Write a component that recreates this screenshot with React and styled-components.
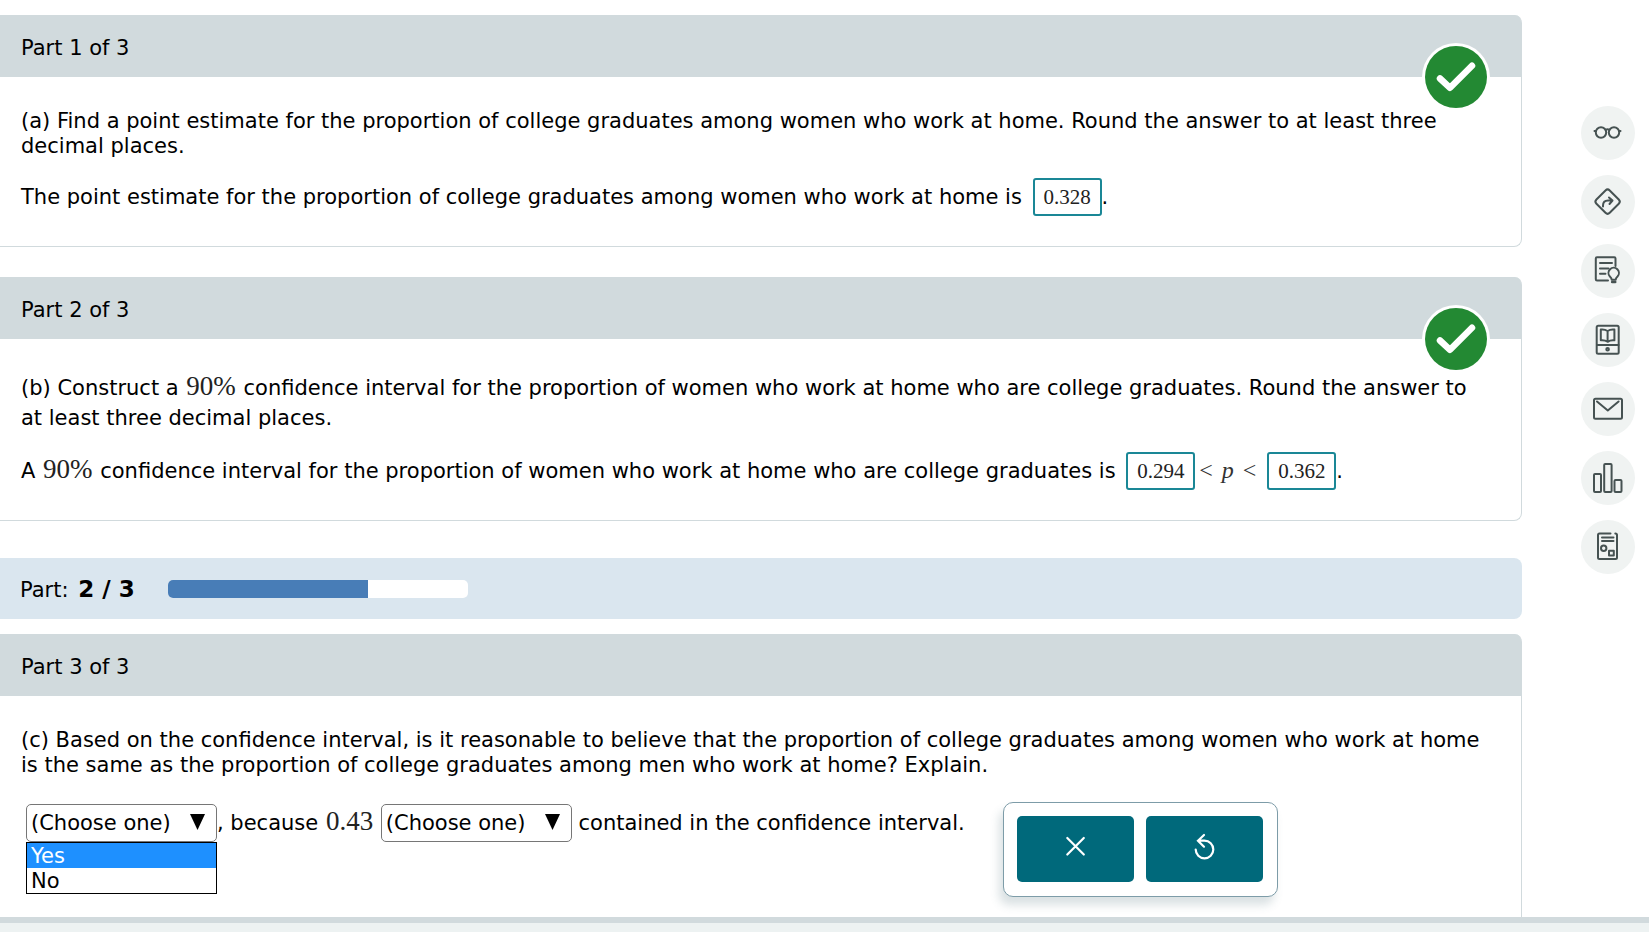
import React from "react";
import styled, { createGlobalStyle } from "styled-components";

const GlobalStyle = createGlobalStyle`
  *, *::before, *::after { box-sizing: border-box; }
  body {
    margin: 0;
    background: #fff;
    color: #000;
    font-family: "DejaVu Sans", Verdana, sans-serif;
    font-size: 21px;
    line-height: 25px;
  }
`;

const Page = styled.div`
  min-height: 100vh;
  display: flex;
  flex-direction: column;
`;

const Body = styled.div`
  flex: 1;
  display: flex;
`;

const Main = styled.main`
  flex: 1;
  min-width: 0;
  padding-top: 15px;
  display: flex;
  flex-direction: column;
`;

const Card = styled.section`
  position: relative;
  border: 1px solid #d1dadd;
  border-width: 0 1px 1px 0;
  border-radius: 0 8px 8px 0;
  margin-bottom: ${(p) => p.$gap || 0}px;
  ${(p) => p.$open && "flex: 1; border-bottom: 0; border-bottom-right-radius: 0;"}
`;

const CardHeader = styled.h2`
  margin: 0;
  height: 62px;
  padding: 4px 21px 0;
  display: flex;
  align-items: center;
  font-size: inherit;
  font-weight: 400;
  background: #d1dadd;
  border-top-right-radius: 6px;
`;

const CardBody = styled.div`
  padding: ${(p) => p.$top || 32}px 30px ${(p) => p.$bottom || 30}px 21px;
`;

const Badge = styled.svg`
  position: absolute;
  top: 28px;
  right: 31px;
  width: 68px;
  height: 68px;
`;

const Question = styled.p`
  margin: 0 0 19px;
  line-height: ${(p) => p.$line || 25}px;
`;

const Answer = styled.p`
  margin: 0;
  line-height: 30px;
`;

const Num = styled.span`
  padding: 0 1px;
  font-family: "Liberation Serif", serif;
  font-size: 27px;
  line-height: 20px;
  color: #222;
`;

const Relation = styled.span`
  display: inline-flex;
  gap: 9px;
  padding: 0 7px 0 4px;
  font-family: "Liberation Serif", serif;
  font-size: 24px;
  line-height: 20px;
  color: #333;
`;

const AnswerInput = styled.input`
  width: 69px;
  height: 38px;
  margin: 0 0 0 4px;
  padding: 0;
  border: 2px solid #1a8796;
  border-radius: 3px;
  background: #fff;
  text-align: center;
  font-family: "Liberation Serif", serif;
  font-size: 21px;
  color: #222;
`;

const Progress = styled.div`
  height: 61px;
  margin-bottom: 15px;
  padding: 0 20px;
  display: flex;
  align-items: center;
  gap: 30px;
  background: #dae6ef;
  border-radius: 0 8px 8px 0;
`;

const ProgressLabel = styled.span`
  min-width: 118px;
  padding-top: 2px;

  b {
    margin-left: 3px;
    font-size: 23px;
  }
`;

const Track = styled.div`
  width: 300px;
  height: 18px;
  border-radius: 5px;
  overflow: hidden;
  background: #fff;
`;

const Fill = styled.div`
  height: 100%;
  background: #487db7;
`;

const ChoiceRow = styled.div`
  display: flex;
  align-items: flex-start;
  gap: 38px;
  padding-top: 5px;
`;

const Sentence = styled.div`
  display: flex;
  align-items: center;
  height: 38px;
  margin: 2px 0 0 5px;
  white-space: pre;
`;

const SelectBox = styled.div`
  position: relative;
  width: 191px;
  height: 38px;
`;

const Select = styled.select`
  appearance: none;
  width: 100%;
  height: 100%;
  padding: 0 4px;
  border: 1px solid #767676;
  border-radius: 5px;
  background: #fff;
  font: inherit;
  color: #000;
`;

const Caret = styled.svg`
  position: absolute;
  right: 12px;
  top: 10px;
  width: 15px;
  height: 16px;
  pointer-events: none;
`;

const Options = styled.ul`
  position: absolute;
  top: 38px;
  left: 0;
  width: 100%;
  margin: 0;
  padding: 0;
  list-style: none;
  border: 1px solid #000;
  background: #fff;
`;

const Option = styled.li`
  height: 25px;
  padding: 1px 4px 0;
  background: ${(p) => (p.$active ? "#1e90ff" : "#fff")};
  color: ${(p) => (p.$active ? "#fff" : "#000")};
`;

const ActionPanel = styled.div`
  display: flex;
  gap: 12px;
  padding: 13px 14px 14px 13px;
  border: 1px solid #7d9ca8;
  border-radius: 10px;
  background: #fff;
  box-shadow: -4px 8px 10px rgba(70, 105, 115, 0.2);
`;

const ActionButton = styled.button`
  width: 117px;
  height: 66px;
  padding: 0;
  border: 0;
  border-radius: 5px;
  background: #00697b;
  display: block;
  svg { display: block; width: 100%; height: 100%; }
`;

const Rail = styled.nav`
  width: 127px;
  padding: 106px 14px 0 0;
  display: flex;
  flex-direction: column;
  align-items: flex-end;
  gap: 15px;
`;

const RailButton = styled.button`
  width: 54px;
  height: 54px;
  padding: 0;
  border: 0;
  border-radius: 50%;
  background: #f0f3f2;
  color: #465252;
  svg { display: block; }
`;

const Footer = styled.footer`
  height: 15px;
  background: #edf2f2;
  border-top: 6px solid #d1dadd;
`;

const railTools = [
  {
    label: "Reading view",
    art: (
      <>
        <circle cx="20" cy="26.5" r="5.2" />
        <circle cx="33" cy="26.5" r="5.2" />
        <path d="M13.500 25h1.500M38 25h1.500M24.5 23.8q2-1 4 0" />
      </>
    ),
  },
  {
    label: "Skip",
    art: (
      <>
        <rect x="17.2" y="17.2" width="18.8" height="18.8" rx="3" transform="rotate(45 26.6 26.6)" />
        <path d="M22 31.500v-1q0-5 5-5h4.500M28 22.500l3.500 3-3 3.500" />
      </>
    ),
  },
  {
    label: "Explanation",
    art: (
      <>
        <path d="M27 36.500H16q-1.200 0-1.200-1.200V14.400q0-1.200 1.200-1.200H33.300q1.200 0 1.200 1.200V22M19 19h12M19 24.500h8.500M19 29.700h5.500" />
        <path d="M30.700 35.800q0-1.800-1.800-3.300a5.200 5.200 0 1 1 7.600 0q-1.800 1.500-1.800 3.300z" />
        <path d="M31.200 38h3" strokeWidth="2.600" />
      </>
    ),
  },
  {
    label: "Textbook",
    art: (
      <>
        <rect x="15.700" y="12.700" width="22" height="28" rx="1.500" />
        <path d="M16 32h21.500M26.600 18v10.800M26.600 18q-3-2-6.800-1.500v10.800q4-.5 6.800 1.500q3-2 6.800-1.500v-10.800q-4-.5-6.800 1.500" />
        <circle cx="26.600" cy="36.300" r="1.300" />
      </>
    ),
  },
  {
    label: "Message",
    art: (
      <>
        <rect x="13" y="16.700" width="28" height="20" rx="1.500" />
        <path d="M16 19.500l10.800 9 10.800-9" />
      </>
    ),
  },
  {
    label: "Statistics",
    art: (
      <>
        <rect x="13" y="23" width="7" height="18" rx="1" />
        <rect x="23.200" y="13" width="7.400" height="28" rx="1" />
        <rect x="33.500" y="29" width="7" height="12" rx="1" />
      </>
    ),
  },
  {
    label: "Formula sheet",
    art: (
      <>
        <path d="M29.500 13.500H18.500q-1.500 0-1.500 1.500V37.500q0 1.500 1.500 1.500H34.500q1.500 0 1.500-1.500V15q0-1.500-1.700-1.500M21 17.500h11.500M21 21h11.500" />
        <circle cx="22.700" cy="28.200" r="2.700" />
        <rect x="28" y="30.800" width="4.800" height="4.800" />
      </>
    ),
  },
];

function CorrectBadge() {
  return (
    <Badge viewBox="0 0 68 68" role="img" aria-label="Correct">
      <circle cx="34" cy="34" r="34" fill="#fff" />
      <circle cx="34" cy="34" r="31" fill="#238933" />
      <path d="M18 35.500L28 44.800L50 22.800" fill="none" stroke="#fff" strokeWidth="6.500" strokeLinecap="round" strokeLinejoin="round" />
    </Badge>
  );
}

function Choice({ label, options, expanded }) {
  return (
    <SelectBox>
      <Select aria-label={label} defaultValue="">
        <option value="">(Choose one)</option>
        {options.map((o) => (
          <option key={o}>{o}</option>
        ))}
      </Select>
      <Caret viewBox="0 0 15 16" aria-hidden="true">
        <path d="M0 0h15L7.500 16z" />
      </Caret>
      {expanded && (
        <Options role="listbox" aria-label={label}>
          {options.map((o, i) => (
            <Option key={o} role="option" aria-selected={i === 0} $active={i === 0}>
              {o}
            </Option>
          ))}
        </Options>
      )}
    </SelectBox>
  );
}

export default function App() {
  return (
    <>
      <GlobalStyle />
      <Page>
        <Body>
          <Main>
            <Card $gap={30}>
              <CardHeader>Part 1 of 3</CardHeader>
              <CorrectBadge />
              <CardBody>
                <Question>
                  (a) Find a point estimate for the proportion of college graduates among women who work at home. Round the
                  answer to at least three decimal places.
                </Question>
                <Answer>
                  The point estimate for the proportion of college graduates among women who work at home is{" "}
                  <AnswerInput aria-label="Point estimate" defaultValue="0.328" />.
                </Answer>
              </CardBody>
            </Card>

            <Card $gap={37}>
              <CardHeader>Part 2 of 3</CardHeader>
              <CorrectBadge />
              <CardBody $top={34}>
                <Question $line={30}>
                  (b) Construct a <Num>90%</Num> confidence interval for the proportion of women who work at home who are
                  college graduates. Round the answer to at least three decimal places.
                </Question>
                <Answer>
                  A <Num>90%</Num> confidence interval for the proportion of women who work at home who are college
                  graduates is <AnswerInput aria-label="Lower bound" defaultValue="0.294" />
                  <Relation>
                    <span>&lt;</span>
                    <i>p</i>
                    <span>&lt;</span>
                  </Relation>
                  <AnswerInput aria-label="Upper bound" defaultValue="0.362" />.
                </Answer>
              </CardBody>
            </Card>

            <Progress>
              <ProgressLabel>
                Part: <b>2 / 3</b>
              </ProgressLabel>
              <Track role="progressbar" aria-label="Parts completed" aria-valuenow={2} aria-valuemax={3}>
                <Fill style={{ width: `${(2 / 3) * 100}%` }} />
              </Track>
            </Progress>

            <Card $open>
              <CardHeader>Part 3 of 3</CardHeader>
              <CardBody $bottom={15}>
                <Question>
                  (c) Based on the confidence interval, is it reasonable to believe that the proportion of college
                  graduates among women who work at home is the same as the proportion of college graduates among men who
                  work at home? Explain.
                </Question>
                <ChoiceRow>
                  <Sentence>
                    <Choice label="Is it reasonable" options={["Yes", "No"]} expanded />
                    <span>
                      , because <Num>0.43</Num>{" "}
                    </span>
                    <Choice label="Is 0.43 contained" options={["is", "is not"]} />
                    <span> contained in the confidence interval.</span>
                  </Sentence>
                  <ActionPanel>
                    <ActionButton aria-label="Clear">
                      <svg viewBox="0 0 117 66" fill="none" stroke="#fff" strokeWidth="2.200" strokeLinecap="round">
                        <path d="M50.300 22l16.500 16.500M66.800 22l-16.500 16.500" />
                      </svg>
                    </ActionButton>
                    <ActionButton aria-label="Undo">
                      <svg viewBox="0 0 117 66" fill="none" stroke="#fff" strokeWidth="2.200" strokeLinecap="round">
                        <path d="M49.700 33.500a8.800 8.800 0 1 0 8.800-8.800h-6M58 19l-6 5.700 6 6" />
                      </svg>
                    </ActionButton>
                  </ActionPanel>
                </ChoiceRow>
              </CardBody>
            </Card>
          </Main>
          <Rail aria-label="Tools">
            {railTools.map((t) => (
              <RailButton key={t.label} aria-label={t.label}>
                <svg width="54" height="54" viewBox="0 0 54 54" fill="none" stroke="currentColor" strokeWidth="2" strokeLinecap="round" strokeLinejoin="round" aria-hidden="true">
                  {t.art}
                </svg>
              </RailButton>
            ))}
          </Rail>
        </Body>
        <Footer />
      </Page>
    </>
  );
}
